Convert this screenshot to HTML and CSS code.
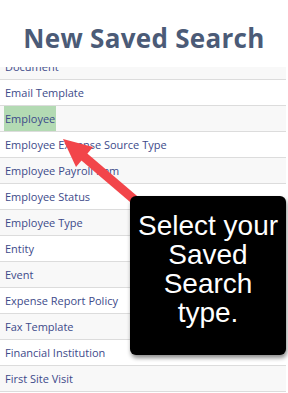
FILE: index.html
```html
<!DOCTYPE html>
<html lang="en">
<head>
  <meta charset="UTF-8">
  <title>New Saved Search</title>
  <link rel="stylesheet" href="styles.css">
</head>
<body>

<div class="page">
  <h1 class="title">New Saved Search</h1>

  <div class="list-wrap">
    <ul class="types">
      <li>Document</li>
      <li>Email Template</li>
      <li><span class="picked">Employee</span></li>
      <li>Employee Expense Source Type</li>
      <li>Employee Payroll Item</li>
      <li>Employee Status</li>
      <li>Employee Type</li>
      <li>Entity</li>
      <li>Event</li>
      <li>Expense Report Policy</li>
      <li>Fax Template</li>
      <li>Financial Institution</li>
      <li>First Site Visit</li>
    </ul>
  </div>

  <!-- arrow pointing at the picked row -->
  <svg class="arrow" width="288" height="393" viewBox="0 0 288 393">
    <line x1="82" y1="155" x2="150" y2="213" stroke="#f2454a" stroke-width="9"/>
    <polygon points="63,139 76,167 93,147" fill="#f2454a"/>
  </svg>

  <div class="callout">Select your Saved Search type.</div>
</div>

</body>
</html>
```

FILE: styles.css
```css
* { box-sizing: border-box; margin: 0; padding: 0; }
body { background: #fff; font-family: "Open Sans", sans-serif; }

.page {
  position: relative;
  width: 288px;
  height: 393px;
  overflow: hidden;
}

.title {
  height: 67px;
  padding-top: 23px;
  text-align: center;
  font-size: 26px;
  font-weight: 700;
  line-height: 30px;
  letter-spacing: 0.3px;
  color: #4b5b77;
}

.list-wrap {
  width: 286px;
  height: 326px;
  overflow: hidden;
}
.types {
  list-style: none;
  margin-top: -13px;
}
.types li {
  height: 26px;
  padding-left: 5px;
  border-bottom: 1px solid #dcdcdc;
  font-size: 11px;
  line-height: 25px;
  color: #3d4a8a;
  background: #fff;
}
.types li:nth-child(odd) { background: #f8f8f8; }

.picked {
  display: inline-block;
  margin-left: -1px;
  padding: 0 1px;
  background: #b3dab3;
}

/* annotation layer */
.arrow {
  position: absolute;
  left: 0; top: 0;
}
.callout {
  position: absolute;
  left: 130px; top: 196px;
  width: 156px; height: 159px;
  padding: 15px 4px 0;
  background: #000;
  border-radius: 6px;
  box-shadow: 1px 3px 4px rgba(0,0,0,0.45);
  color: #fff;
  font-family: "Liberation Sans", Arial, sans-serif;
  font-size: 28px;
  line-height: 29px;
  text-align: center;
}
```
